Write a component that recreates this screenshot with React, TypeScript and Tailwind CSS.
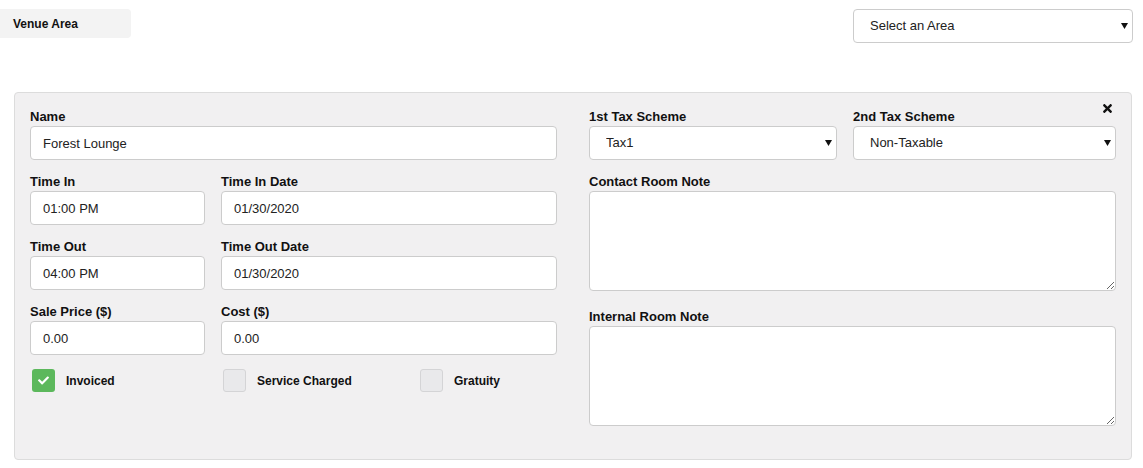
import { FaCheck, FaTimes } from 'react-icons/fa';

const inputCls =
  'h-[34px] w-full rounded-[4px] border border-[#cccccc] bg-white pl-[12px] text-[13px] text-[#222] outline-none';

function Caret() {
  return (
    <svg
      className="pointer-events-none absolute right-[5px] top-1/2 -translate-y-1/2"
      width="7"
      height="6"
      viewBox="0 0 7 6"
    >
      <path d="M0 0h7L3.5 6z" fill="#111" />
    </svg>
  );
}

function Select({ value, className }: { value: string; className?: string }) {
  return (
    <div className={`relative ${className ?? ''}`}>
      <select
        defaultValue={value}
        className="h-[34px] w-full appearance-none rounded-[4px] border border-[#cccccc] bg-white pl-[16px] text-[13px] text-[#222] outline-none"
      >
        <option>{value}</option>
      </select>
      <Caret />
    </div>
  );
}

function Label({ children }: { children: React.ReactNode }) {
  return (
    <div className="mb-[2px] h-[15px] text-[13px] leading-[15px] font-bold text-[#111]">
      {children}
    </div>
  );
}

function Field({
  label,
  value,
  className,
}: {
  label: string;
  value: string;
  className?: string;
}) {
  return (
    <div className={className}>
      <Label>{label}</Label>
      <input className={inputCls} defaultValue={value} />
    </div>
  );
}

function Check({ label, checked }: { label: string; checked?: boolean }) {
  return (
    <div className="flex items-center">
      {checked ? (
        <div className="flex h-[23px] w-[23px] items-center justify-center rounded-[3px] bg-[#5cb85c]">
          <FaCheck className="text-white" size={11} />
        </div>
      ) : (
        <div className="h-[23px] w-[23px] rounded-[3px] border border-[#d4d4d6] bg-[#e9e9eb]" />
      )}
      <span className="ml-[11px] text-[12px] font-bold text-[#111]">{label}</span>
    </div>
  );
}

export default function App() {
  return (
    <div className="min-h-[468px] bg-white font-['Liberation_Sans',Arial,sans-serif]">
      <div className="flex items-start justify-between pt-[9px] pr-[10px]">
        <div className="flex h-[29px] w-[131px] items-center rounded-r-[4px] bg-[#f3f3f3] pl-[13px] text-[12px] font-bold text-[#111]">
          Venue Area
        </div>
        <Select value="Select an Area" className="w-[280px]" />
      </div>

      <div className="relative mt-[49px] ml-[14px] mr-[11px] rounded-[4px] border border-[#dcdcdc] bg-[#f1f0f1] px-[15px] pt-[16px] pb-[33px]">
        <FaTimes className="absolute right-[17px] top-[9px] text-[#111]" size={13} />
        <div className="grid grid-cols-2 gap-x-[32px]">
          {/* left column */}
          <div className="flex flex-col gap-[14px]">
            <Field label="Name" value="Forest Lounge" />
            <div className="flex gap-[16px]">
              <Field label="Time In" value="01:00 PM" className="w-[175px] shrink-0" />
              <Field label="Time In Date" value="01/30/2020" className="flex-1" />
            </div>
            <div className="flex gap-[16px]">
              <Field label="Time Out" value="04:00 PM" className="w-[175px] shrink-0" />
              <Field label="Time Out Date" value="01/30/2020" className="flex-1" />
            </div>
            <div className="flex gap-[16px]">
              <Field label="Sale Price ($)" value="0.00" className="w-[175px] shrink-0" />
              <Field label="Cost ($)" value="0.00" className="flex-1" />
            </div>
            <div className="flex pl-[2px]">
              <div className="w-[191px]">
                <Check label="Invoiced" checked />
              </div>
              <div className="w-[197px]">
                <Check label="Service Charged" />
              </div>
              <Check label="Gratuity" />
            </div>
          </div>

          {/* right column */}
          <div className="flex flex-col">
            <div className="flex gap-[16px]">
              <div className="w-[248px] shrink-0">
                <Label>1st Tax Scheme</Label>
                <Select value="Tax1" />
              </div>
              <div className="flex-1">
                <Label>2nd Tax Scheme</Label>
                <Select value="Non-Taxable" />
              </div>
            </div>
            <div className="mt-[14px]">
              <Label>Contact Room Note</Label>
              <textarea className="block h-[100px] w-full rounded-[4px] border border-[#cccccc] bg-white outline-none" />
            </div>
            <div className="mt-[18px]">
              <Label>Internal Room Note</Label>
              <textarea className="block h-[100px] w-full rounded-[4px] border border-[#cccccc] bg-white outline-none" />
            </div>
          </div>
        </div>
      </div>
    </div>
  );
}
